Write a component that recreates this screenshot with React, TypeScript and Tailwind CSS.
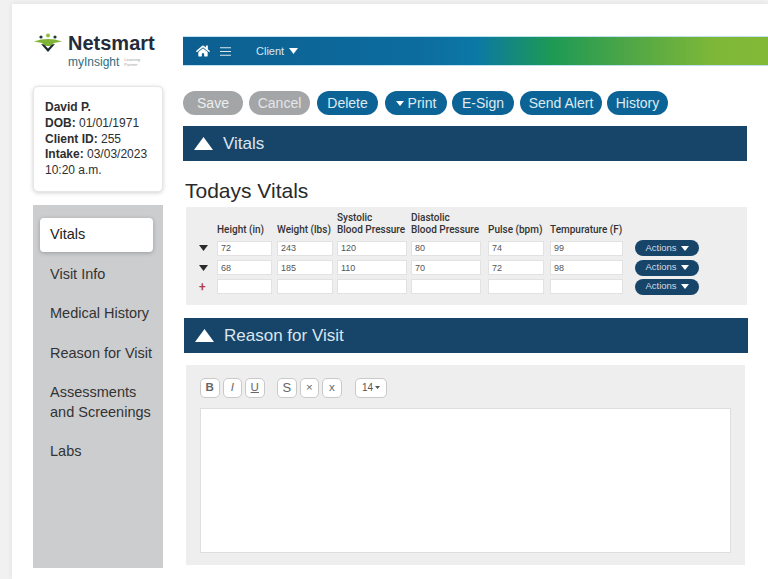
import { FaHome } from "react-icons/fa";

const sans = { fontFamily: '"Liberation Sans", Arial, sans-serif' };

const buttons = [
  { label: "Save", box: "w-[60px] bg-[#a3a5a7] text-[#eceeef]" },
  { label: "Cancel", box: "w-[61px] ml-[6px] bg-[#a3a5a7] text-[#e4e6e8]" },
  { label: "Delete", box: "w-[61px] ml-[7px] bg-[#0c6496] text-[#dfeaf2]" },
];

const moreButtons = [
  { label: "E-Sign", box: "w-[62px] ml-[5px]" },
  { label: "Send Alert", box: "w-[82px] ml-[6px]" },
  { label: "History", box: "w-[61px] ml-[5px]" },
];

const navItems = ["Visit Info", "Medical History", "Reason for Visit"];

const rows = [
  { caret: true, values: ["72", "243", "120", "80", "74", "99"] },
  { caret: true, values: ["68", "185", "110", "70", "72", "98"] },
  { caret: false, values: ["", "", "", "", "", ""] },
];

const inputWidths = ["w-[55px]", "w-[56px]", "w-[70px]", "w-[70px]", "w-[56px]", "w-[73px]"];

function Logo() {
  return (
    <div className="h-[38px] flex flex-col">
      <div className="flex items-center h-[22px]">
        <svg width="30" height="20" viewBox="0 0 30 20" className="mr-[5px] -mt-[1px] shrink-0">
          <circle cx="15" cy="2.5" r="2" fill="#8fbf3f" />
          <circle cx="8" cy="4" r="1.6" fill="#1d3a2c" />
          <circle cx="22" cy="4" r="1.6" fill="#1d3a2c" />
          <path d="M1 8.5 L8 6.5 L15 6 L22 6.5 L29 8.5 L21 10 L18 13 L12 13 L9 10 Z" fill="#7fb437" />
          <path d="M8 11 L15 19 L22 11 L19 11.5 L15 15.5 L11 11.5 Z" fill="#1c2b33" />
        </svg>
        <span className="text-[20px] font-bold text-[#232c3a]" style={sans}>
          Netsmart
        </span>
      </div>
      <div className="flex items-center pl-[35px] mt-[1px]">
        <span className="text-[12px] leading-[14px] text-[#2f6d80]" style={sans}>
          myInsight
        </span>
        <span className="text-[4px] leading-[5px] text-[#9a9fa3] ml-[5px]" style={sans}>
          Learning
          <br />
          Partner
        </span>
      </div>
    </div>
  );
}

function SectionBar({ title, className }: { title: string; className: string }) {
  return (
    <div className={`h-[35px] bg-[#174469] flex items-center pl-[11px] ${className}`}>
      <svg width="19" height="13" viewBox="0 0 19 13" className="mr-[10px]">
        <path d="M9.5 0 L19 13 L0 13 Z" fill="#fff" />
      </svg>
      <span className="text-[17px] text-[#dbe6ee]" style={sans}>
        {title}
      </span>
    </div>
  );
}

function ToolButton({ label, className = "" }: { label: string; className?: string }) {
  return (
    <div
      className={`h-[20px] w-[19.5px] rounded-[5px] border border-[#c9c9c9] bg-white flex items-center justify-center text-[11.5px] text-[#666] ${className}`}
      style={sans}
    >
      {label}
    </div>
  );
}

export default function App() {
  return (
    <div className="h-[579px] w-[768px] overflow-hidden bg-[#f1f1f1] pt-[4px] pl-[12px]" style={sans}>
      <div className="h-[575px] bg-white shadow-[0_0_6px_rgba(0,0,0,0.08)] flex pl-[21px] pt-[28px]">
        <aside className="w-[130px] shrink-0">
          <Logo />
          <div className="mt-[16px] h-[106px] rounded-[5px] bg-white border border-[#e6e6e6] shadow-[0_1px_4px_rgba(0,0,0,0.18)] pl-[11px] pt-[13px] text-[12px] leading-[15.8px] text-[#2e2e2e]">
            <div className="font-bold">David P.</div>
            <div><b>DOB:</b> 01/01/1971</div>
            <div><b>Client ID:</b> 255</div>
            <div><b>Intake:</b> 03/03/2023</div>
            <div>10:20 a.m.</div>
          </div>
          <nav className="mt-[13px] h-[363px] bg-[#cccdcf] pt-[13px] pl-[7px] text-[14.5px] text-[#333]">
            <div className="w-[113px] h-[34px] rounded-[4px] bg-white shadow-[0_1px_4px_rgba(0,0,0,0.25)] flex items-center pl-[10px] text-[#222]">
              Vitals
            </div>
            <div className="pl-[10px] pt-[12px] flex flex-col gap-[19.3px] leading-[20px]">
              {navItems.map((item) => (
                <div key={item} className="whitespace-nowrap">{item}</div>
              ))}
              <div>
                Assessments
                <br />
                and Screenings
              </div>
              <div>Labs</div>
            </div>
          </nav>
        </aside>

        <main className="ml-[20px] flex-1 min-w-0">
          <div className="mt-[4px] h-[30px] bg-[linear-gradient(90deg,#0c5f90_0%,#0d6c9e_40%,#0b78a6_50%,#14877f_56%,#1d9a55_63%,#4ea646_76%,#7fb838_91%,#82ba36_100%)] border-y border-[#bfe3ee] flex items-center pl-[13px] text-white">
            <FaHome size={14} />
            <svg width="11" height="9" viewBox="0 0 11 9" className="ml-[10px]">
              <path d="M0 0.75 H11 M0 4.5 H11 M0 8.25 H11" stroke="#dbe9f1" strokeWidth="1.2" />
            </svg>
            <span className="ml-[25px] text-[11px] text-[#d9e8f1]">Client</span>
            <svg width="9" height="6" viewBox="0 0 9 6" className="ml-[5px]">
              <path d="M0 0 H9 L4.5 6 Z" fill="#fff" />
            </svg>
          </div>

          <div className="mt-[25px] flex text-[14px]">
            {buttons.map((b) => (
              <div key={b.label} className={`h-[24px] rounded-full flex items-center justify-center ${b.box}`}>
                {b.label}
              </div>
            ))}
            <div className="h-[24px] w-[62px] ml-[7px] rounded-full bg-[#0c6496] text-[#dfeaf2] flex items-center justify-center">
              <svg width="8" height="5" viewBox="0 0 8 5" className="mr-[4px]">
                <path d="M0 0 H8 L4 5 Z" fill="#fff" />
              </svg>
              Print
            </div>
            {moreButtons.map((b) => (
              <div key={b.label} className={`h-[24px] rounded-full bg-[#0c6496] text-[#dfeaf2] flex items-center justify-center ${b.box}`}>
                {b.label}
              </div>
            ))}
          </div>

          <SectionBar title="Vitals" className="mt-[11px] w-[564px]" />

          <h1 className="mt-[17px] ml-[2px] text-[21px] leading-[26px] text-[#2a2a2a]">Todays Vitals</h1>

          <div className="mt-[3px] ml-[3px] w-[561px] h-[98px] bg-[#eeeeee] pt-[5px]">
            <div
              className="grid grid-cols-[31px_60px_60px_74px_77px_62px_85px_64px] grid-rows-[26px_20px_19px_19px] items-center text-[10px] font-medium text-[#333]"
              style={{ fontFamily: "Roboto, sans-serif" }}
            >
              <div />
              {["Height (in)", "Weight (lbs)"].map((h) => (
                <div key={h} className="self-end mb-[2px] leading-[12px] whitespace-nowrap">{h}</div>
              ))}
              <div className="self-end mb-[2px] leading-[12px] whitespace-nowrap">Systolic<br />Blood Pressure</div>
              <div className="self-end mb-[2px] leading-[12px] whitespace-nowrap">Diastolic<br />Blood Pressure</div>
              <div className="self-end mb-[2px] leading-[12px] whitespace-nowrap">Pulse (bpm)</div>
              <div className="self-end mb-[2px] leading-[12px] whitespace-nowrap">Tempurature (F)</div>
              <div />
              {rows.map((row, i) => (
                <div key={i} className="contents">
                  <div className="pl-[13px] flex items-center">
                    {row.caret ? (
                      <svg width="9" height="6" viewBox="0 0 9 6">
                        <path d="M0 0 H9 L4.5 6 Z" fill="#2b2b2b" />
                      </svg>
                    ) : (
                      <span className="text-[12px] leading-none text-[#b23a45]">+</span>
                    )}
                  </div>
                  {row.values.map((v, j) => (
                    <input
                      key={j}
                      readOnly
                      value={v}
                      className={`h-[15px] bg-white border border-[#e2e2e2] pl-[3px] text-[9px] font-normal text-[#555] outline-none ${inputWidths[j]}`}
                      style={sans}
                    />
                  ))}
                  <div className="h-[16px] w-[64px] rounded-full bg-[#174469] text-[#cfdde8] text-[9.5px] font-normal flex items-center justify-center" style={sans}>
                    Actions
                    <svg width="8" height="5" viewBox="0 0 8 5" className="ml-[4px]">
                      <path d="M0 0 H8 L4 5 Z" fill="#fff" />
                    </svg>
                  </div>
                </div>
              ))}
            </div>
          </div>

          <SectionBar title="Reason for Visit" className="mt-[13px] ml-[1px] w-[564px]" />

          <div className="mt-[12px] ml-[3px] w-[559px] h-[200px] bg-[#eeeeee] pl-[14px] pt-[12px]">
            <div className="flex items-center h-[21px]">
              <ToolButton label="B" className="font-bold" />
              <ToolButton label="I" className="ml-[3px] italic font-serif" />
              <ToolButton label="U" className="ml-[3px] underline" />
              <ToolButton label="S" className="ml-[12.5px] text-[13px]" />
              <ToolButton label="×" className="ml-[3px]" />
              <ToolButton label="x" className="ml-[3px]" />
              <div className="ml-[13.5px] h-[20px] w-[32px] rounded-[5px] border border-[#c9c9c9] bg-white flex items-center justify-center text-[10px] text-[#555]">
                14
                <svg width="5" height="3" viewBox="0 0 5 3" className="ml-[2px]">
                  <path d="M0 0 H5 L2.5 3 Z" fill="#555" />
                </svg>
              </div>
            </div>
            <div className="mt-[10px] w-[531px] h-[145px] bg-white border border-[#dedede]" />
          </div>
        </main>
      </div>
    </div>
  );
}
